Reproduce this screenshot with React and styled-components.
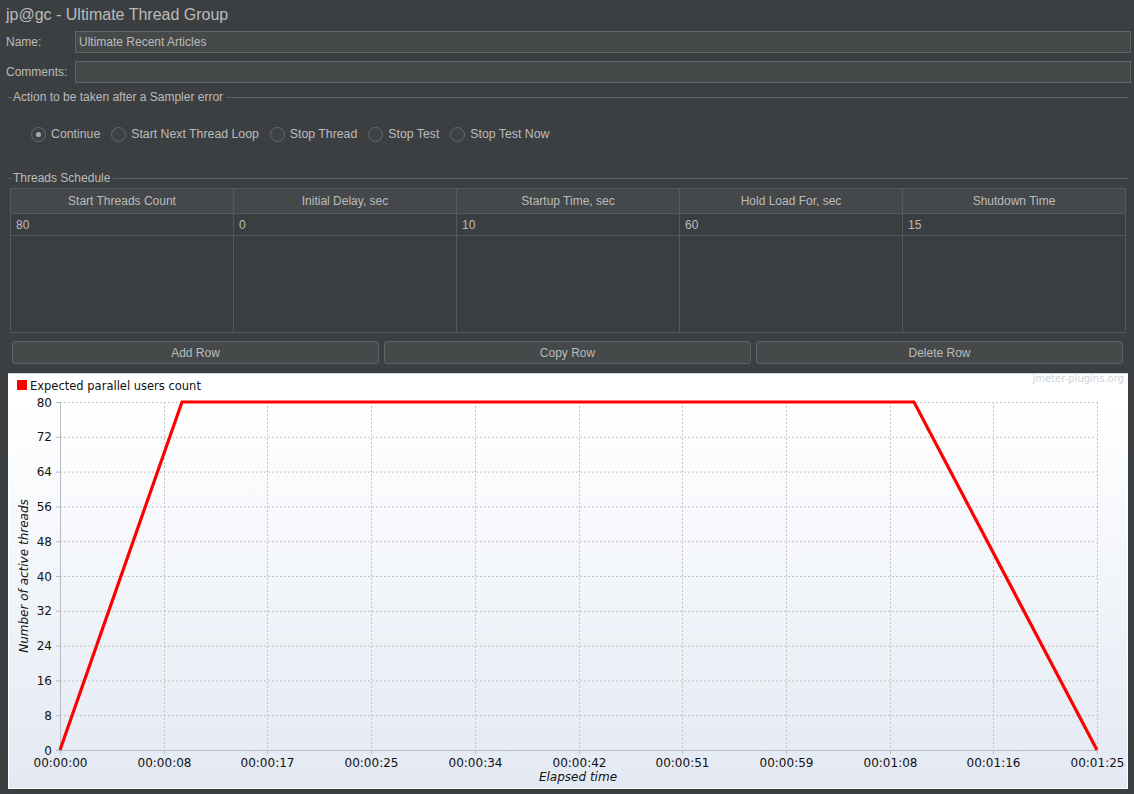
import React from "react";
import styled, { createGlobalStyle } from "styled-components";

const Global = createGlobalStyle`
  html, body { margin: 0; padding: 0; background: #3c3f41; }
  body { font-family: "Liberation Sans", Arial, sans-serif; color: #bbbbbb; }
  * { box-sizing: border-box; }
`;

const Page = styled.div`
  width: 1134px;
  height: 794px;
  background: #3c3f41;
  overflow: hidden;
  display: flex;
  flex-direction: column;
`;

const Title = styled.div`
  height: 31px;
  padding: 5px 0 0 6px;
  font-size: 16px;
  line-height: 20px;
  color: #bbbbbb;
`;

const FieldRow = styled.div`
  display: flex;
  align-items: center;
  height: 22px;
  margin: 0 3px 8px 6px;
`;

const Label = styled.div`
  width: 69px;
  font-size: 12px;
`;

const Field = styled.div`
  flex: 1;
  height: 22px;
  background: #45494a;
  border: 1px solid #646464;
  font-size: 12px;
  line-height: 20px;
  padding-left: 3px;
  color: #bbbbbb;
`;

const Legend = styled.div`
  display: flex;
  align-items: center;
  height: 14px;
  margin: ${(p) => p.$mt}px 6px 0 8px;
  font-size: 12px;
  &::before {
    content: "";
    width: 4px;
    height: 1px;
    background: #5e6163;
    margin-right: 1px;
  }
  &::after {
    content: "";
    flex: 1;
    height: 1px;
    background: #5e6163;
    margin-left: 3px;
  }
`;

const RadioGroup = styled.div`
  display: flex;
  align-items: center;
  height: 16px;
  margin: 22px 0 0 31px;
  gap: 11px;
`;

const RadioItem = styled.div`
  display: flex;
  align-items: center;
  gap: 5px;
  font-size: 12.3px;
`;

const Circle = styled.span`
  width: 15px;
  height: 15px;
  border-radius: 50%;
  border: 1px solid #676a6c;
  background: #3f4244;
  display: flex;
  align-items: center;
  justify-content: center;
  &::after {
    content: "";
    width: 5px;
    height: 5px;
    border-radius: 50%;
    background: ${(p) => (p.$on ? "#a9a9a9" : "transparent")};
  }
`;

const Table = styled.table`
  margin: 3px 8px 0 10px;
  width: 1116px;
  border-collapse: collapse;
  table-layout: fixed;
  font-size: 12px;
  border: 1px solid #535658;
`;

const Th = styled.th`
  height: 25px;
  background: #45484a;
  border: 1px solid #56595b;
  font-weight: normal;
  color: #bbbbbb;
  text-align: center;
  padding: 0;
`;

const Td = styled.td`
  height: ${(p) => p.$h}px;
  border-left: 1px solid #56595b;
  border-right: 1px solid #56595b;
  border-bottom: ${(p) => (p.$line ? "1px solid #56595b" : "none")};
  padding: 0 0 0 5px;
  vertical-align: middle;
  background: #3b3e40;
  color: #bbbbbb;
`;

const ButtonRow = styled.div`
  display: flex;
  gap: 5px;
  margin: 8px 11px 0 12px;
`;

const Button = styled.button`
  flex: 1;
  height: 23px;
  background: #45494a;
  border: 1px solid #5f6264;
  border-radius: 3px;
  font-family: "Liberation Sans", Arial, sans-serif;
  font-size: 12px;
  color: #bbbbbb;
  padding: 0;
`;

const ChartPanel = styled.div`
  margin: 9px 6px 0 8px;
  height: 416px;
  border: 1px solid #ffffff;
  border-top: 1px solid #cfd2d6;
  background: #ffffff;
  overflow: hidden;
`;

const X0 = 60;
const X1 = 1097;
const Y0 = 750;
const Y1 = 402;
const sx = (s) => X0 + (s / 85) * (X1 - X0);
const sy = (v) => Y0 - (v / 80) * (Y0 - Y1);

const xTicks = ["00:00:00", "00:00:08", "00:00:17", "00:00:25", "00:00:34", "00:00:42", "00:00:51", "00:00:59", "00:01:08", "00:01:16", "00:01:25"];
const yTicks = [0, 8, 16, 24, 32, 40, 48, 56, 64, 72, 80];

function Chart() {
  const font = "'DejaVu Sans', Verdana, sans-serif";
  const pts = [
    [sx(0), sy(0)],
    [sx(10), sy(80)],
    [sx(70), sy(80)],
    [sx(85), sy(0)],
  ]
    .map((p) => p.join(","))
    .join(" ");
  return (
    <svg width="1118" height="414" viewBox="9 374 1118 414" style={{ display: "block" }}>
      <defs>
        <linearGradient id="bg" x1="0" y1="0" x2="0" y2="1">
          <stop offset="0" stopColor="#ffffff" />
          <stop offset="0.08" stopColor="#ffffff" />
          <stop offset="1" stopColor="#e3e9f3" />
        </linearGradient>
      </defs>
      <rect x="9" y="374" width="1118" height="414" fill="url(#bg)" />
      <rect x="17" y="380" width="10" height="10" fill="#ff0000" />
      <text x="30" y="389.5" fontFamily={font} fontSize="11.5" fill="#111">Expected parallel users count</text>
      <text x="1124" y="382" fontFamily={font} fontSize="10" fill="#cfd3d8" textAnchor="end">jmeter-plugins.org</text>
      {yTicks.map((v) => (
        <g key={v}>
          {v !== 0 && (
            <line x1={X0} x2={X1} y1={sy(v) + 0.5} y2={sy(v) + 0.5} stroke="#c4c4c4" strokeDasharray="2,2" />
          )}
          <line x1={X0 - 4} x2={X0} y1={sy(v) + 0.5} y2={sy(v) + 0.5} stroke="#b8bcc2" />
          <text x={52} y={sy(v) + 4.5} fontFamily={font} fontSize="12" fill="#111" textAnchor="end">{v}</text>
        </g>
      ))}
      {xTicks.map((t, i) => {
        const x = Math.round(X0 + (i * (X1 - X0)) / 10) + 0.5;
        return (
          <g key={t}>
            {i !== 0 && <line x1={x} x2={x} y1={Y1} y2={Y0} stroke="#c4c4c4" strokeDasharray="2,2" />}
            <line x1={x} x2={x} y1={Y0} y2={Y0 + 4} stroke="#b8bcc2" />
            <text x={x} y={767} fontFamily={font} fontSize="12" fill="#111" textAnchor="middle">{t}</text>
          </g>
        );
      })}
      <line x1={X0 + 0.5} x2={X0 + 0.5} y1={Y1} y2={Y0} stroke="#b8bcc2" />
      <line x1={X0} x2={X1} y1={Y0 + 0.5} y2={Y0 + 0.5} stroke="#b8bcc2" />
      <polyline points={pts} fill="none" stroke="#ff0000" strokeWidth="3.2" strokeLinejoin="miter" />
      <text x={578} y={781} fontFamily={font} fontSize="12" fontStyle="italic" fill="#111" textAnchor="middle">Elapsed time</text>
      <text
        x={0}
        y={0}
        transform={`translate(28 ${(Y0 + Y1) / 2}) rotate(-90)`}
        fontFamily={font}
        fontSize="12"
        fontStyle="italic"
        fill="#111"
        textAnchor="middle"
      >
        Number of active threads
      </text>
    </svg>
  );
}

const radios = ["Continue", "Start Next Thread Loop", "Stop Thread", "Stop Test", "Stop Test Now"];
const headers = ["Start Threads Count", "Initial Delay, sec", "Startup Time, sec", "Hold Load For, sec", "Shutdown Time"];
const values = ["80", "0", "10", "60", "15"];

export default function App() {
  return (
    <Page>
      <Global />
      <Title>jp@gc - Ultimate Thread Group</Title>
      <FieldRow>
        <Label>Name:</Label>
        <Field>Ultimate Recent Articles</Field>
      </FieldRow>
      <FieldRow>
        <Label>Comments:</Label>
        <Field />
      </FieldRow>
      <Legend $mt={-1}>Action to be taken after a Sampler error</Legend>
      <RadioGroup>
        {radios.map((r, i) => (
          <RadioItem key={r}>
            <Circle $on={i === 0} />
            {r}
          </RadioItem>
        ))}
      </RadioGroup>
      <Legend $mt={29}>Threads Schedule</Legend>
      <Table>
        <thead>
          <tr>
            {headers.map((h) => (
              <Th key={h}>{h}</Th>
            ))}
          </tr>
        </thead>
        <tbody>
          <tr>
            {values.map((v, i) => (
              <Td key={i} $h={22} $line>{v}</Td>
            ))}
          </tr>
          <tr>
            {values.map((v, i) => (
              <Td key={i} $h={97} />
            ))}
          </tr>
        </tbody>
      </Table>
      <ButtonRow>
        <Button>Add Row</Button>
        <Button>Copy Row</Button>
        <Button>Delete Row</Button>
      </ButtonRow>
      <ChartPanel>
        <Chart />
      </ChartPanel>
    </Page>
  );
}
